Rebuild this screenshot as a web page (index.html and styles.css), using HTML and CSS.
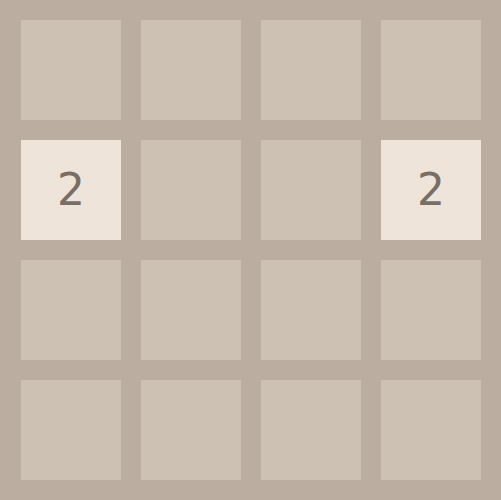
FILE: index.html
```html
<!DOCTYPE html>
<html>
<head>
<meta charset="utf-8">
<link rel="stylesheet" href="styles.css">
</head>
<body>
<div class="board">
  <div class="cell"></div><div class="cell"></div><div class="cell"></div><div class="cell"></div>
  <div class="cell tile-2">2</div><div class="cell"></div><div class="cell"></div><div class="cell tile-2">2</div>
  <div class="cell"></div><div class="cell"></div><div class="cell"></div><div class="cell"></div>
  <div class="cell"></div><div class="cell"></div><div class="cell"></div><div class="cell"></div>
</div>
</body>
</html>
```
FILE: styles.css
```css
html, body {
  margin: 0;
  padding: 0;
  background: #bbada0;
}
.board {
  width: 501px;
  height: 500px;
  box-sizing: border-box;
  padding: 20px 20px 20px 21px;
  display: grid;
  grid-template-columns: repeat(4, 100px);
  grid-template-rows: repeat(4, 100px);
  gap: 20px;
  background: #bbada0;
}
.cell {
  background: #cdc1b4;
  display: flex;
  align-items: center;
  justify-content: center;
  font-family: "DejaVu Sans", sans-serif;
  font-size: 44px;
  line-height: 1;
  color: #776e65;
}
.tile-2 {
  background: #eee4da;
}
```
